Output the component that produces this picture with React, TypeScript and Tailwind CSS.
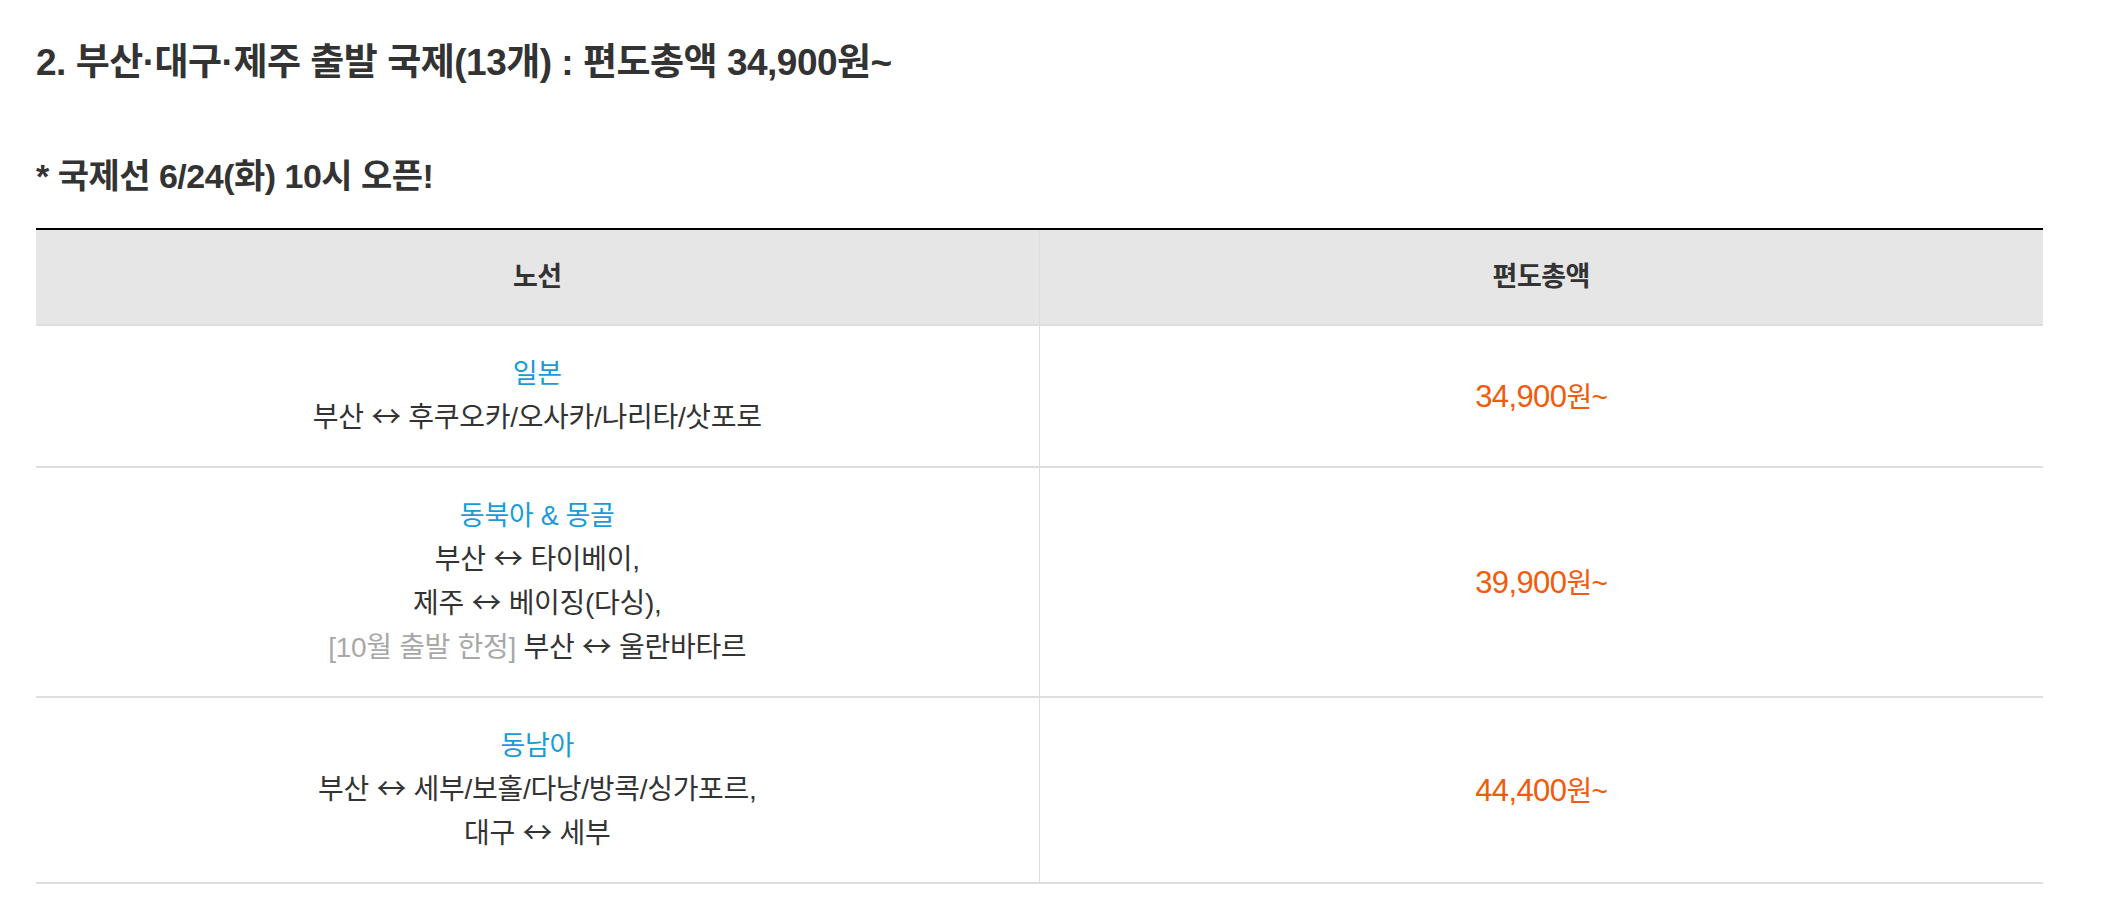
const font = "font-['Liberation_Sans','Noto_Sans_CJK_KR',sans-serif]"

type Route = {
  region: string
  lines: { note?: string; from: string; to: string }[]
  price: string
}

const routes: Route[] = [
  {
    region: "일본",
    lines: [{ from: "부산", to: "후쿠오카/오사카/나리타/삿포로" }],
    price: "34,900",
  },
  {
    region: "동북아 & 몽골",
    lines: [
      { from: "부산", to: "타이베이," },
      { from: "제주", to: "베이징(다싱)," },
      { note: "[10월 출발 한정]", from: "부산", to: "울란바타르" },
    ],
    price: "39,900",
  },
  {
    region: "동남아",
    lines: [
      { from: "부산", to: "세부/보홀/다낭/방콕/싱가포르," },
      { from: "대구", to: "세부" },
    ],
    price: "44,400",
  },
]

export default function App() {
  return (
    <div className={`${font} min-h-screen bg-white px-[36px] pt-[41px] text-[#333]`}>
      <h2 className="text-[37px] font-bold leading-[44px] tracking-[-0.5px] text-[#333]">
        2. 부산·대구·제주 출발 국제(13개) : 편도총액 34,900원~
      </h2>
      <p className="mt-[71px] text-[34px] font-bold leading-[40px] tracking-[-0.5px] text-[#333]">
        * 국제선 6/24(화) 10시 오픈!
      </p>

      <div className="mt-[32px] w-[2007px] border-t-2 border-black">
        <div className="grid grid-cols-2 bg-[#e6e6e6] border-b-2 border-[#dedede]">
          <div className="h-[94px] flex items-center justify-center border-r border-[#dcdcdc] text-[27px] font-bold tracking-[-0.5px]">
            노선
          </div>
          <div className="h-[94px] flex items-center justify-center text-[27px] font-bold tracking-[-0.5px]">
            편도총액
          </div>
        </div>

        {routes.map((r, i) => (
          <div key={i} className="grid grid-cols-2 border-b-2 border-[#dedede]">
            <div className="py-[26px] border-r border-[#dcdcdc] text-center text-[28px] tracking-[-0.3px]">
              <div className="h-[44px] leading-[44px] text-[27px] text-[#1a9bd7]">{r.region}</div>
              {r.lines.map((l, j) => (
                <div key={j} className="h-[44px] leading-[44px] text-[#333]">
                  {l.note && <span className="text-[#a8a8a8]">{l.note} </span>}
                  {l.from} <span className="font-['Noto_Sans_CJK_KR',sans-serif] text-[30px] leading-none">↔</span> {l.to}
                </div>
              ))}
            </div>
            <div className="flex items-baseline justify-center self-center text-[28px] leading-none text-[#f25a0c] tracking-[-0.6px]">
              <span className="text-[31px]">{r.price}</span>
              <span>원~</span>
            </div>
          </div>
        ))}
      </div>
    </div>
  )
}
